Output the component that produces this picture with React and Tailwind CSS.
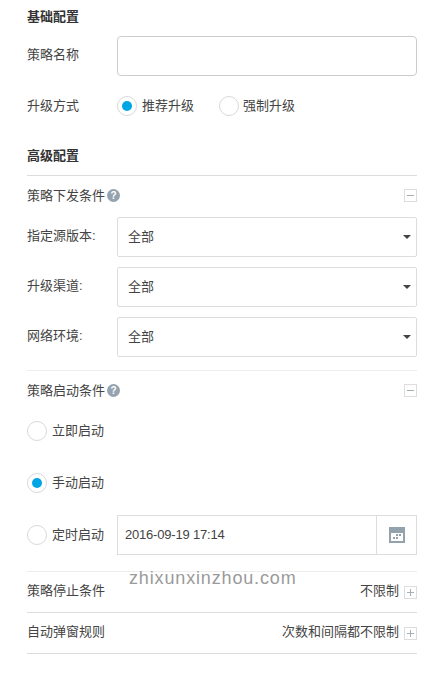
import React from "react";

const font = "font-['Liberation_Sans','Noto_Sans_CJK_SC',sans-serif]";

function Radio({ checked, label, tight }) {
  return (
    <div className={tight ? "flex items-center gap-[4px]" : "flex items-center gap-[5px]"}>
      <span className="flex h-[20px] w-[20px] items-center justify-center rounded-full border border-[#d9d9d9] bg-white">
        {checked && <span className="h-[10px] w-[10px] rounded-full bg-[#00a5e5]"></span>}
      </span>
      <span>{label}</span>
    </div>
  );
}

function Toggle({ plus }) {
  return (
    <span className="relative block h-[13px] w-[13px] border border-[#dddddd]">
      <span className="absolute left-[2px] top-[5px] h-px w-[7px] bg-[#a3aeb5]"></span>
      {plus && <span className="absolute left-[5px] top-[2px] h-[7px] w-px bg-[#a3aeb5]"></span>}
    </span>
  );
}

function Help() {
  return (
    <span className="ml-px flex h-[13px] w-[13px] items-center justify-center rounded-full bg-[#94a3af] text-[10px] leading-none font-bold text-white">
      ?
    </span>
  );
}

function SelectRow({ label }) {
  return (
    <div className="flex h-[40px] items-start">
      <span className="w-[90px] pt-[4px] leading-[30px]">{label}</span>
      <div className="flex h-[40px] flex-1 items-center justify-between rounded-[2px] border border-[#dddddd] pr-[5px] pl-[10px]">
        <span>全部</span>
        <svg width="8" height="4" viewBox="0 0 8 4">
          <path d="M0 0H8L4 4Z" fill="#444444" />
        </svg>
      </div>
    </div>
  );
}

function Section({ title, children }) {
  return (
    <div className="flex h-[41px] items-center justify-between border-b border-[#dddddd]">
      <span className="pb-[2px]">{title}</span>
      <div className="flex items-center gap-[5px]">
        <span className="pb-[2px]">{children}</span>
        <Toggle plus />
      </div>
    </div>
  );
}

export default function App() {
  return (
    <div className={`relative h-[674px] w-[430px] overflow-hidden bg-white pr-[13px] pl-[27px] text-[13px] text-[#444444] ${font}`}>
      <h2 className="pt-[8px] text-[13px] leading-[18px] font-bold text-[#333333]">基础配置</h2>

      <div className="mt-[10px] flex h-[40px] items-start">
        <span className="w-[90px] leading-[38px]">策略名称</span>
        <div className="h-[40px] flex-1 rounded-[4px] border border-[#cccccc]"></div>
      </div>

      <div className="mt-[20px] flex h-[20px] items-center">
        <span className="w-[90px]">升级方式</span>
        <div className="flex gap-[25px]">
          <Radio checked label="推荐升级" />
          <Radio tight label="强制升级" />
        </div>
      </div>

      <h2 className="mt-[31px] border-b border-[#dddddd] pb-[10px] text-[13px] leading-[18px] font-bold text-[#333333]">高级配置</h2>

      <div className="flex h-[39px] items-center justify-between">
        <div className="flex items-center gap-px">
          <span>策略下发条件</span>
          <Help />
        </div>
        <Toggle />
      </div>

      <div className="mt-[2px] flex flex-col gap-[10px]">
        <SelectRow label="指定源版本:" />
        <SelectRow label="升级渠道:" />
        <SelectRow label="网络环境:" />
      </div>

      <div className="mt-[13px] flex h-[40px] items-center justify-between border-t border-[#eeeeee]">
        <div className="flex items-center gap-px">
          <span>策略启动条件</span>
          <Help />
        </div>
        <Toggle />
      </div>

      <div className="mt-[11px] flex h-[20px] items-center">
        <Radio label="立即启动" />
      </div>
      <div className="mt-[32px] flex h-[20px] items-center">
        <Radio checked label="手动启动" />
      </div>

      <div className="mt-[22px] flex h-[40px] items-center">
        <div className="w-[90px]">
          <Radio label="定时启动" />
        </div>
        <div className="flex h-[40px] flex-1 border border-[#dddddd]">
          <span className="flex-1 pl-[7px] leading-[37px] tracking-[-0.2px]">2016-09-19 17:14</span>
          <span className="flex w-[40px] items-center justify-center border-l border-[#dddddd]">
            <svg width="16" height="16" viewBox="0 0 16 16" shapeRendering="crispEdges">
              <path d="M0 0H16V16H0Z" fill="#94a3ab" />
              <path d="M2 6H14V14H2Z" fill="#ffffff" />
              <path d="M7 7H9V9H7ZM10 7H12V9H10ZM4 10H6V12H4ZM7 10H9V12H7Z" fill="#94a3ab" />
            </svg>
          </span>
        </div>
      </div>

      <div className="mt-[16px] border-t border-[#eeeeee]">
        <Section title="策略停止条件">不限制</Section>
        <Section title="自动弹窗规则">次数和间隔都不限制</Section>
      </div>

      <span className="absolute top-[566px] left-[129px] text-[18px] leading-[24px] tracking-[0.85px] text-[#9a9a9a]">zhixunxinzhou.com</span>
    </div>
  );
}
